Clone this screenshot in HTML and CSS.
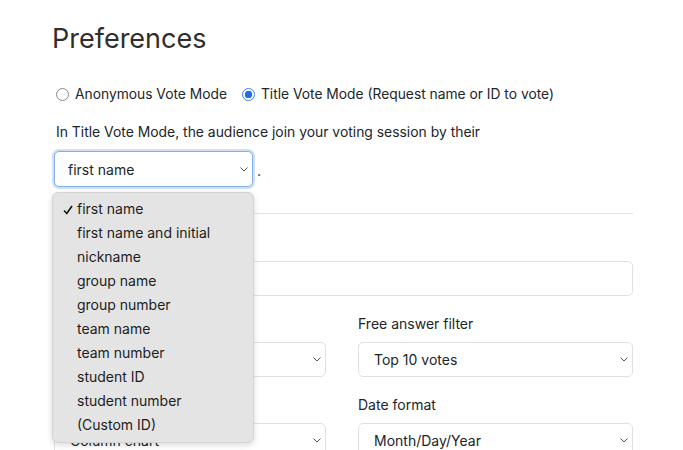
FILE: index.html
```html
<!DOCTYPE html>
<html lang="en">
<head>
    <meta charset="UTF-8">
    <meta name="viewport" content="width=device-width, initial-scale=1.0">
    <title>Preferences</title>
    <link rel="stylesheet" href="styles.css">
</head>
<body>
    <div class="page">
        <h1 class="title">Preferences</h1>

        <div class="mode-row">
            <label class="radio"><span class="radio-dot"></span>Anonymous Vote Mode</label>
            <label class="radio"><span class="radio-dot checked"></span>Title Vote Mode (Request name or ID to vote)</label>
        </div>

        <p class="hint">In Title Vote Mode, the audience join your voting session by their</p>

        <div class="id-row">
            <div class="select-wrap">
                <div class="select focused">
                    <span>first name</span>
                    <svg class="chevron" width="8" height="5" viewBox="0 0 8 5"><polyline points="0.5,0.5 4,4 7.5,0.5" fill="none" stroke="#555" stroke-width="1"/></svg>
                </div>
                <ul class="popup">
                    <li class="selected">
                        <svg class="check" width="10" height="10" viewBox="0 0 10 10"><polyline points="1,5.5 3.8,8.5 9,1" fill="none" stroke="#1a1a1a" stroke-width="1.7"/></svg>
                        first name
                    </li>
                    <li>first name and initial</li>
                    <li>nickname</li>
                    <li>group name</li>
                    <li>group number</li>
                    <li>team name</li>
                    <li>team number</li>
                    <li>student ID</li>
                    <li>student number</li>
                    <li>(Custom ID)</li>
                </ul>
            </div>
            <span class="dot">.</span>
        </div>

        <hr class="divider">

        <!-- label sits under the open popup -->
        <label class="field-label"></label>
        <div class="input"></div>

        <div class="field-grid">
            <div>
                <label class="field-label"></label>
                <div class="select">
                    <span></span>
                    <svg class="chevron" width="8" height="5" viewBox="0 0 8 5"><polyline points="0.5,0.5 4,4 7.5,0.5" fill="none" stroke="#555" stroke-width="1"/></svg>
                </div>
            </div>
            <div>
                <label class="field-label">Free answer filter</label>
                <div class="select">
                    <span>Top 10 votes</span>
                    <svg class="chevron" width="8" height="5" viewBox="0 0 8 5"><polyline points="0.5,0.5 4,4 7.5,0.5" fill="none" stroke="#555" stroke-width="1"/></svg>
                </div>
            </div>
            <div>
                <label class="field-label"></label>
                <div class="select">
                    <span>Column chart</span>
                    <svg class="chevron" width="8" height="5" viewBox="0 0 8 5"><polyline points="0.5,0.5 4,4 7.5,0.5" fill="none" stroke="#555" stroke-width="1"/></svg>
                </div>
            </div>
            <div>
                <label class="field-label">Date format</label>
                <div class="select">
                    <span>Month/Day/Year</span>
                    <svg class="chevron" width="8" height="5" viewBox="0 0 8 5"><polyline points="0.5,0.5 4,4 7.5,0.5" fill="none" stroke="#555" stroke-width="1"/></svg>
                </div>
            </div>
        </div>
    </div>
</body>
</html>
```

FILE: styles.css
```css
body {
    margin: 0;
    font-family: Inter, "Liberation Sans", sans-serif;
    color: #212529;
    background: #fff;
    overflow: hidden;
}
.page {
    width: 579px;
    padding: 22px 0 0 54px;
}
.title {
    margin: 0 0 0 -2px;
    font-size: 27px;
    font-weight: 400;
    line-height: 34px;
    color: #2e2e2e;
}
.mode-row {
    display: flex;
    gap: 15px;
    margin-top: 28px;
    padding-left: 2px;
    font-size: 13.8px;
    line-height: 20px;
}
.radio {
    display: flex;
    align-items: center;
    gap: 6px;
}
.radio-dot {
    width: 11px;
    height: 11px;
    border: 1px solid #8a8a8a;
    border-radius: 50%;
    background: #fff;
}
.radio-dot.checked {
    border-color: #3b82f6;
    background: radial-gradient(circle, #1f6feb 0 3.5px, #fff 4px);
}
.hint {
    margin: 18px 0 0 2px;
    font-size: 13.9px;
    line-height: 20px;
}
.id-row {
    display: flex;
    align-items: flex-end;
    margin-top: 9px;
}
.select-wrap {
    position: relative;
    width: 199px;
}
.select {
    display: flex;
    align-items: center;
    justify-content: space-between;
    height: 35px;
    box-sizing: border-box;
    padding: 0 4px 0 15px;
    border: 1px solid #dee2e6;
    border-radius: 5px;
    font-size: 14px;
    background: #fff;
}
.select.focused {
    height: 36px;
    padding-left: 13px;
    border-color: #86aee6;
    box-shadow: 0 0 0 2px #cfe0f6;
}
.dot {
    margin-left: 4px;
    padding-bottom: 8px;
    font-size: 14px;
}
.popup {
    position: absolute;
    top: 41px;
    left: -2px;
    width: 202px;
    box-sizing: border-box;
    margin: 0;
    padding: 4px 0 5px;
    list-style: none;
    background: #e4e4e4;
    border: 1px solid #d4d4d4;
    border-radius: 6px;
    box-shadow: 0 2px 6px rgba(0, 0, 0, 0.15);
    z-index: 2;
}
.popup li {
    position: relative;
    height: 24px;
    line-height: 24px;
    padding-left: 24px;
    font-size: 14px;
    color: #1d1d1d;
}
.check {
    position: absolute;
    left: 10px;
    top: 8px;
}
.divider {
    margin: 26px 0 0;
    border: 0;
    border-top: 1px solid #e3e3e3;
}
.field-label {
    display: block;
    height: 21px;
    margin: 18px 0 8px;
    font-size: 14px;
    line-height: 21px;
}
.input {
    height: 35px;
    box-sizing: border-box;
    border: 1px solid #dee2e6;
    border-radius: 5px;
}
.field-grid {
    display: grid;
    grid-template-columns: 272px 275px;
    column-gap: 32px;
}
.field-grid .field-label {
    margin-top: 17px;
}
```
